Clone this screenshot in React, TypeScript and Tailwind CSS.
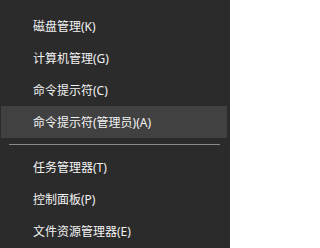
import React from "react";

const groupA = ["磁盘管理(K)", "计算机管理(G)", "命令提示符(C)", "命令提示符(管理员)(A)"];
const groupB = ["任务管理器(T)", "控制面板(P)", "文件资源管理器(E)"];

function Item({ label, active }: { label: string; active?: boolean }) {
  return (
    <div className={`h-[32px] flex items-center ${active ? "bg-[#414141]" : ""} mx-[1px] pl-[32px] pr-2`}>
      <span className="mt-[2px] text-[12px] leading-none text-[#f2f2f2]">{label}</span>
    </div>
  );
}

export default function App() {
  return (
    <div
      className="w-[230px] h-[248px] bg-[#2b2b2b] pt-[10px] overflow-hidden"
      style={{ fontFamily: '"Noto Sans", "Noto Sans CJK SC", sans-serif' }}
    >
      <div className="pr-[2px]">
        {groupA.map((l, i) => (
          <Item key={l} label={l} active={i === 3} />
        ))}
      </div>
      <div className="h-[13px] flex items-center pl-[9px] pr-[10px]">
        <div className="h-px w-full bg-[#8a8a8a]" />
      </div>
      <div className="pr-[2px]">
        {groupB.map((l) => (
          <Item key={l} label={l} />
        ))}
      </div>
    </div>
  );
}
